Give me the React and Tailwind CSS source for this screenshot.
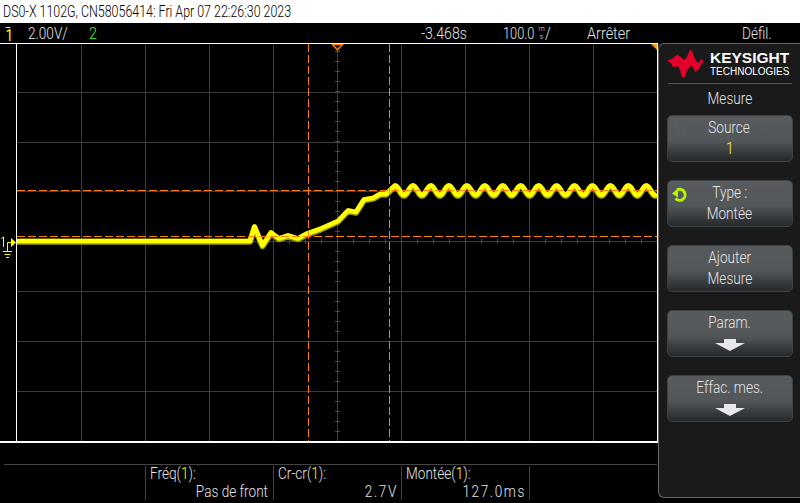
// settled part of the step: damped ringing around the top level
const ring = Array.from({ length: 263 }, (_, i) => {
  const x = 395 + i;
  const y = 190.3 - 4.8 * Math.cos((2 * Math.PI * i) / 17.95);
  return `L${x} ${y.toFixed(1)}`;
}).join(" ");
const TRACE = `M17 241 L250 241 L254.5 226.5 L262.5 245.5 L271 232.5 L279 238.5 L288 235.5 L298 238.5 L306 234 L320 229 L338 221 L348 210.5 L356 212 L364 199.5 L373 198 L380 194 L386 194 ${ring}`;

const vLines = [81, 145, 209, 273, 337, 401, 465, 529, 593];
const hLines = [92, 142, 191, 241, 291, 341, 391];
const hTicks = Array.from({ length: 40 }, (_, i) => 17 + i * 16);
const vTicks = Array.from({ length: 40 }, (_, i) => 51 + i * 10);

function Plot() {
  return (
    <svg width="640" height="397" viewBox="17 44 640 397" className="block">
      {vLines.map(x => <line key={x} x1={x + 0.5} x2={x + 0.5} y1="44" y2="441" stroke="#3c3c3c" />)}
      {hLines.map(y => <line key={y} x1="17" x2="657" y1={y + 0.5} y2={y + 0.5} stroke="#3c3c3c" />)}
      {hTicks.map(x => <line key={x} x1={x + 0.5} x2={x + 0.5} y1="239" y2="244" stroke="#4a4a4a" />)}
      {vTicks.map(y => <line key={y} x1="335" x2="340" y1={y + 0.5} y2={y + 0.5} stroke="#4a4a4a" />)}

      <path d={TRACE} transform="translate(0 0.8)" fill="none" stroke="#9a9a00" strokeWidth="6" strokeLinejoin="round" />
      <path d={TRACE} fill="none" stroke="#ffff00" strokeWidth="4.6" strokeLinejoin="round" />

      <line x1="17" x2="657" y1="190.5" y2="190.5" stroke="#ff8000" strokeDasharray="8 3" />
      <line x1="17" x2="657" y1="236.5" y2="236.5" stroke="#ff8000" strokeDasharray="8 3" />
      <line x1="308.5" x2="308.5" y1="44" y2="441" stroke="#ff8000" strokeDasharray="8 3" />
      <line x1="389.5" x2="389.5" y1="44" y2="441" stroke="#ff8000" strokeDasharray="8 3" />

      <path d="M332.5 44.5 L342.5 44.5 L337.5 50 Z" fill="none" stroke="#ff8000" strokeWidth="1.5" />
      <path d="M651 44 L657 44 L657 50 Z" fill="#ff9a1a" />
    </svg>
  );
}

function GroundMark() {
  return (
    <svg width="16" height="397" viewBox="0 44 16 397" className="block shrink-0">
      <path d="M1.5 238.5 L3.5 237 L3.5 247 M7.5 251 L7.5 242.5 L11 242.5" fill="none" stroke="#ffff00" />
      <path d="M11 238 L16 242.5 L11 247 Z" fill="#ffff00" />
      <path d="M3 251.5 H12 M4.5 254.5 H10.5 M6 257.5 H9" fill="none" stroke="#ffff00" />
    </svg>
  );
}

function KeysightLogo() {
  return (
    <svg width="36" height="28" viewBox="0 0 36 28" className="block shrink-0">
      <path d="M0 10 L4 9 L7 6 L10 5 L13 7 L16 10 L19 7 L21 2 L22 0 L24 1 L26 6 L28 11 L31 13 L33 9 L36 11.5 L33 15 L31 19 L27 22 L25 17 L22 16 L19 21 L16 28 L14 27 L12 20 L10 16 L7 17 L5 17 L3 13 L0 11 Z" fill="#e4002b" />
    </svg>
  );
}

function Knob({ active }) {
  const color = active ? "#b5f500" : "#5c6062";
  return (
    <svg width="18" height="16" viewBox="0 0 18 16" className="absolute left-[3px] top-[6px]">
      <path d="M6 3 A5.5 5.5 0 1 1 4.5 11.5" fill="none" stroke={color} strokeWidth={active ? 3 : 1} />
      <path d={active ? "M1 6.5 L7 1.5 L7 10.5 Z" : "M2.5 4 L6 1 L6 7 Z"} fill={color} />
    </svg>
  );
}

function DownArrow() {
  return (
    <svg width="30" height="12" viewBox="0 0 30 12" className="block">
      <path d="M9 0 H21 V4 H30 L15 12 L0 4 H9 Z" fill="#e8e8e8" />
    </svg>
  );
}

function SoftKey({ top, bottom, knob, knobActive, yellow, arrow }) {
  return (
    <div className="relative w-[126px] h-[47px] shrink-0 rounded-[5px] border border-[#3d4244] bg-gradient-to-b from-[#575b5d] via-[#53575a] via-55% to-[#26292c] flex flex-col items-center text-[#e4e4e4] text-[17px] leading-[21px] pt-[1px]">
      {knob && <Knob active={knobActive} />}
      <span className="scale-x-[0.8] whitespace-nowrap">{top}</span>
      {arrow ? (
        <div className="mt-[6px]"><DownArrow /></div>
      ) : (
        <span className={`scale-x-[0.8] whitespace-nowrap ${yellow ? "text-[#ffff00]" : ""}`}>{bottom}</span>
      )}
    </div>
  );
}

function SidePanel() {
  return (
    <div className="w-[142px] h-[455px] shrink-0 bg-[#1a1a1a] border-l border-t border-b border-[#666] rounded-l-[6px] flex flex-col items-center text-[#e4e4e4]">
      <div className="flex items-center gap-[6px] h-[39px] w-full pl-[9px] shrink-0">
        <KeysightLogo />
        <div className="flex flex-col text-white font-['Liberation_Sans',sans-serif]">
          <span className="text-[15.5px] leading-[15px] font-bold">KEYSIGHT</span>
          <span className="text-[10px] leading-[12px] mt-[1px]">TECHNOLOGIES</span>
        </div>
      </div>
      <div className="w-[124px] h-px bg-[#555] shrink-0"></div>
      <div className="text-[17px] leading-[22px] mt-[3px] scale-x-[0.8]">Mesure</div>
      <div className="flex flex-col gap-[18px] mt-[6px]">
        <SoftKey top="Source" bottom="1" knob yellow />
        <SoftKey top="Type :" bottom="Montée" knob knobActive />
        <SoftKey top="Ajouter" bottom="Mesure" />
        <SoftKey top="Param." arrow />
        <SoftKey top="Effac. mes." arrow />
      </div>
    </div>
  );
}

function Measure({ label, value, numeric }) {
  return (
    <div className="w-[128px] h-[34px] shrink-0 border-r border-[#444] text-[#e4e4e4] text-[17px] leading-[18px] pl-[4px] pr-[5px] flex flex-col">
      <span className="-mt-[2px] origin-left scale-x-[0.8] whitespace-nowrap">{label}(<span className="text-[#ffff00]">1</span>):</span>
      <span className={`origin-right scale-x-[0.8] whitespace-nowrap text-right ${numeric ? "tracking-[2px] -mr-[2px]" : ""}`}>{value}</span>
    </div>
  );
}

export default function App() {
  return (
    <div className="w-[800px] h-[503px] bg-black overflow-hidden flex flex-col font-['Roboto',sans-serif] font-light">
      <div className="h-[23px] bg-white text-black text-[17px] leading-[23px] pl-[3px] shrink-0 overflow-hidden">
        <span className="inline-block origin-left scale-x-[0.73] whitespace-nowrap">DS0-X 1102G, CN58056414: Fri Apr 07 22:26:30 2023</span>
      </div>

      <div className="h-[20px] flex items-center text-[17px] leading-[20px] text-[#e4e4e4] shrink-0 whitespace-nowrap">
        <span className="w-[28px] pl-[5px] text-[#ffff00]">
          <span className="block w-[6px] h-[13px] border-t border-[#ffff00] text-center leading-[14px] font-normal scale-x-[0.8]">1</span>
        </span>
        <span className="w-[61px] origin-left scale-x-[0.8]">2.00V/</span>
        <span className="w-[332px] text-[#33ff33] origin-left scale-x-[0.85]">2</span>
        <span className="w-[82px] origin-left scale-x-[0.83]">-3.468s</span>
        <span className="w-[84px] flex items-center">
          <span className="origin-left scale-x-[0.75] w-[35px]">100.0</span>
          <span className="flex flex-col text-[7px] leading-[8px] w-[7px] items-center">
            <span>m</span>
            <span>s</span>
          </span>
          <span className="origin-left scale-x-[0.85]">/</span>
        </span>
        <span className="w-[155px] origin-left scale-x-[0.85]">Arrêter</span>
        <span className="origin-left scale-x-[0.8]">Défil.</span>
      </div>

      <div className="flex-1 flex min-h-0">
        <div className="w-[658px] shrink-0 flex flex-col">
          <div className="border-t border-b-2 border-white flex h-[400px] shrink-0 w-[658px]">
            <GroundMark />
            <div className="border-x border-white w-[642px] shrink-0 h-[397px]">
              <Plot />
            </div>
          </div>
          <div className="mt-[21px] ml-[4px] border-t border-[#444] w-[653px] pt-[1px] flex">
            <div className="w-[142px] h-[34px] shrink-0 border-r border-[#444]"></div>
            <Measure label="Fréq" value="Pas de front" />
            <Measure label="Cr-cr" value="2.7V" numeric />
            <Measure label="Montée" value="127.0ms" numeric />
          </div>
        </div>
        <SidePanel />
      </div>
    </div>
  );
}
